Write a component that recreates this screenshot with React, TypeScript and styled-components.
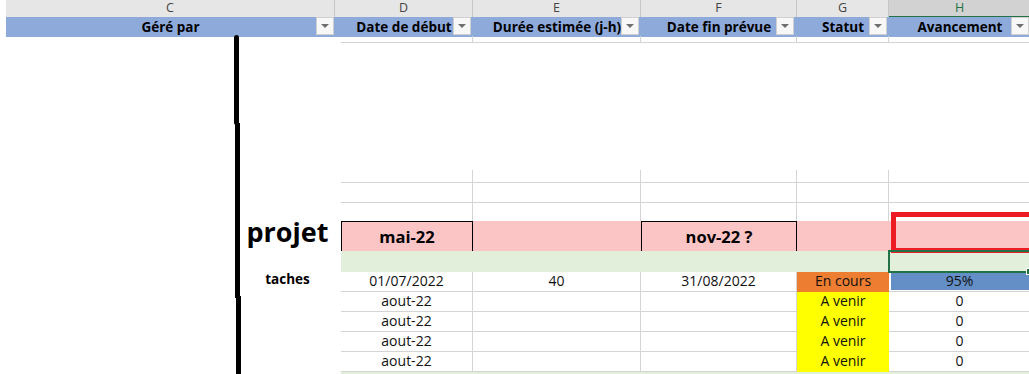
import React from "react";
import styled, { createGlobalStyle } from "styled-components";

const GlobalStyle = createGlobalStyle`
  html, body { margin: 0; padding: 0; background: #ffffff; }
  body { font-family: "Open Sans", "Liberation Sans", sans-serif; color: #000000; }
  #root { width: 1029px; height: 374px; overflow: hidden; }
`;

const HEADER_COLS = "6px 329px 138px 168px 156px 92px 142px";
const BODY_COLS = "341px 132px 168px 156px 92px 142px";

const Sheet = styled.div`
  position: relative;
  width: 1029px;
  height: 374px;
  overflow: hidden;
  background: #ffffff;
  display: flex;
  flex-direction: column;
`;

const LetterRow = styled.div`
  display: grid;
  grid-template-columns: ${HEADER_COLS};
  height: 17px;
  flex: none;
`;

const Letter = styled.div<{ $active?: boolean; $blank?: boolean }>`
  box-sizing: border-box;
  background: ${(p) => (p.$blank ? "#ffffff" : p.$active ? "#d2d2d2" : "#e6e6e6")};
  border-right: ${(p) => (p.$blank ? "none" : "1px solid #c6c6c6")};
  border-bottom: ${(p) => (p.$blank ? "none" : p.$active ? "2px solid #217346" : "1px solid #ababab")};
  color: ${(p) => (p.$active ? "#217346" : "#444444")};
  font-size: 12.5px;
  line-height: 16px;
  text-align: center;
`;

const FilterRow = styled.div`
  display: grid;
  grid-template-columns: ${HEADER_COLS};
  height: 19px;
  flex: none;
`;

const FilterCell = styled.div<{ $blank?: boolean }>`
  position: relative;
  background: ${(p) => (p.$blank ? "#ffffff" : "#8eaadb")};
  font-weight: 700;
  font-size: 13.5px;
  line-height: 20px;
  text-align: center;
  white-space: nowrap;
`;

const FilterButton = styled.span<{ $right?: number }>`
  position: absolute;
  right: ${(p) => p.$right ?? 2}px;
  top: 0;
  width: 18px;
  height: 18px;
  box-sizing: border-box;
  background: #f7f7f7;
  border: 1px solid #d0d0d0;
  display: flex;
  align-items: center;
  justify-content: center;
  &::after {
    content: "";
    width: 0;
    height: 0;
    border-left: 4px solid transparent;
    border-right: 4px solid transparent;
    border-top: 4px solid #6e6e6e;
  }
`;

const BodyRow = styled.div<{ $h: number }>`
  display: grid;
  grid-template-columns: ${BODY_COLS};
  height: ${(p) => p.$h}px;
  flex: none;
`;

const Spacer = styled.div<{ $h: number }>`
  height: ${(p) => p.$h}px;
  flex: none;
`;

type Fill = "none" | "pink" | "green" | "orange" | "yellow";
const FILLS: Record<Fill, string> = {
  none: "transparent",
  pink: "#fcc5c5",
  green: "#e2efda",
  orange: "#ed7d31",
  yellow: "#ffff00",
};

const Cell = styled.div<{ $fill?: Fill; $right?: boolean; $bottom?: boolean; $boxed?: boolean }>`
  position: relative;
  box-sizing: border-box;
  background: ${(p) => FILLS[p.$fill ?? "none"]};
  border-right: ${(p) => (p.$right ? "1px solid #d4d4d4" : "none")};
  border-bottom: ${(p) => (p.$bottom ? "1px solid #d4d4d4" : "none")};
  ${(p) => (p.$boxed ? "border: 1px solid #000000;" : "")}
  font-size: 14px;
  line-height: 17px;
  text-align: center;
  white-space: nowrap;
  color: #111111;
`;

const BoxText = styled.span`
  display: block;
  font-weight: 700;
  font-size: 16.5px;
  line-height: 30px;
  color: #000000;
`;

const LabelCell = styled.div<{ $size: number; $lh: number }>`
  box-sizing: border-box;
  padding: 0 6px 0 240px;
  font-weight: 700;
  font-size: ${(p) => p.$size}px;
  line-height: ${(p) => p.$lh}px;
  text-align: center;
  white-space: nowrap;
  color: #000000;
`;

const CellText = styled.span`
  position: relative;
`;

const DataBar = styled.span`
  position: absolute;
  left: 2px;
  top: 0;
  bottom: 1px;
  background: #638ec6;
`;

const LineShape = styled.svg`
  position: absolute;
  left: 0;
  top: 0;
  pointer-events: none;
`;

const RedFrame = styled.div`
  position: absolute;
  left: 891px;
  top: 212px;
  width: 150px;
  height: 41px;
  box-sizing: border-box;
  border: 5px solid #ed1c24;
`;

const Selection = styled.div`
  position: absolute;
  left: 888px;
  top: 250px;
  width: 144px;
  height: 23px;
  box-sizing: border-box;
  border: 2px solid #217346;
`;

const SelectionHandle = styled.div`
  position: absolute;
  left: 1026px;
  top: 268px;
  width: 7px;
  height: 7px;
  box-sizing: border-box;
  background: #217346;
  border: 1px solid #ffffff;
`;

const letters = ["", "C", "D", "E", "F", "G", "H"];
const filters = ["", "Géré par", "Date de début", "Durée estimée (j-h)", "Date fin prévue", "Statut", "Avancement"];

type Task = { start: string; duration: string; end: string; status: "En cours" | "A venir"; progress: number | null; label?: string };

const tasks: Task[] = [
  { start: "01/07/2022", duration: "40", end: "31/08/2022", status: "En cours", progress: 0.95, label: "taches" },
  { start: "aout-22", duration: "", end: "", status: "A venir", progress: 0 },
  { start: "aout-22", duration: "", end: "", status: "A venir", progress: 0 },
  { start: "aout-22", duration: "", end: "", status: "A venir", progress: 0 },
  { start: "aout-22", duration: "", end: "", status: "A venir", progress: 0 },
];

const maxProgress = Math.max(...tasks.map((t) => t.progress ?? 0));

const GridRow: React.FC<{ h: number; bottom?: boolean }> = ({ h, bottom }) => (
  <BodyRow $h={h}>
    <Cell />
    <Cell $right $bottom={bottom} />
    <Cell $right $bottom={bottom} />
    <Cell $right $bottom={bottom} />
    <Cell $right $bottom={bottom} />
    <Cell $right $bottom={bottom} />
  </BodyRow>
);

export default function App() {
  return (
    <>
      <GlobalStyle />
      <Sheet>
        <LetterRow>
          {letters.map((l, i) => (
            <Letter key={i} $blank={i === 0} $active={l === "H"}>
              {l}
            </Letter>
          ))}
        </LetterRow>
        <FilterRow>
          {filters.map((f, i) => (
            <FilterCell key={i} $blank={i === 0}>
              {f}
              {i > 0 && <FilterButton $right={i === 1 ? 1 : i === 4 ? 3 : 2} />}
            </FilterCell>
          ))}
        </FilterRow>
        <GridRow h={7} bottom />
        <Spacer $h={127} />
        <GridRow h={13} bottom />
        <GridRow h={20} bottom />
        <GridRow h={18} />
        <BodyRow $h={30}>
          <LabelCell $size={27} $lh={22}>projet</LabelCell>
          <Cell $fill="pink" $boxed>
            <BoxText>mai-22</BoxText>
          </Cell>
          <Cell $fill="pink" />
          <Cell $fill="pink" $boxed>
            <BoxText>nov-22 ?</BoxText>
          </Cell>
          <Cell $fill="pink" />
          <Cell $fill="pink" />
        </BodyRow>
        <BodyRow $h={21}>
          <Cell />
          <Cell $fill="green" />
          <Cell $fill="green" />
          <Cell $fill="green" />
          <Cell $fill="green" />
          <Cell $fill="green" />
        </BodyRow>
        {tasks.map((t, i) => (
          <BodyRow $h={20} key={i}>
            {t.label ? <LabelCell $size={13.5} $lh={14}>{t.label}</LabelCell> : <Cell />}
            <Cell $right $bottom>{t.start}</Cell>
            <Cell $right $bottom>{t.duration}</Cell>
            <Cell $right $bottom>{t.end}</Cell>
            <Cell $fill={t.status === "En cours" ? "orange" : "yellow"}>{t.status}</Cell>
            <Cell $right $bottom>
              {t.progress && t.progress > 0 ? (
                <>
                  <DataBar style={{ width: `calc(${(t.progress / maxProgress) * 100}% - 2px)` }} />
                  <CellText>{Math.round(t.progress * 100)}%</CellText>
                </>
              ) : (
                <CellText>{t.progress ?? ""}</CellText>
              )}
            </Cell>
          </BodyRow>
        ))}
        <BodyRow $h={10}>
          <Cell />
          <Cell $fill="green" />
          <Cell $fill="green" />
          <Cell $fill="green" />
          <Cell $fill="green" />
          <Cell $fill="green" />
        </BodyRow>

        <LineShape width="1029" height="374" viewBox="0 0 1029 374">
          <rect x="234" y="35" width="5" height="90" rx="2.5" fill="#000000" />
          <rect x="235" y="123" width="5" height="175" fill="#000000" />
          <rect x="236" y="296" width="5" height="80" fill="#000000" />
        </LineShape>
        <RedFrame />
        <Selection />
        <SelectionHandle />
      </Sheet>
    </>
  );
}
